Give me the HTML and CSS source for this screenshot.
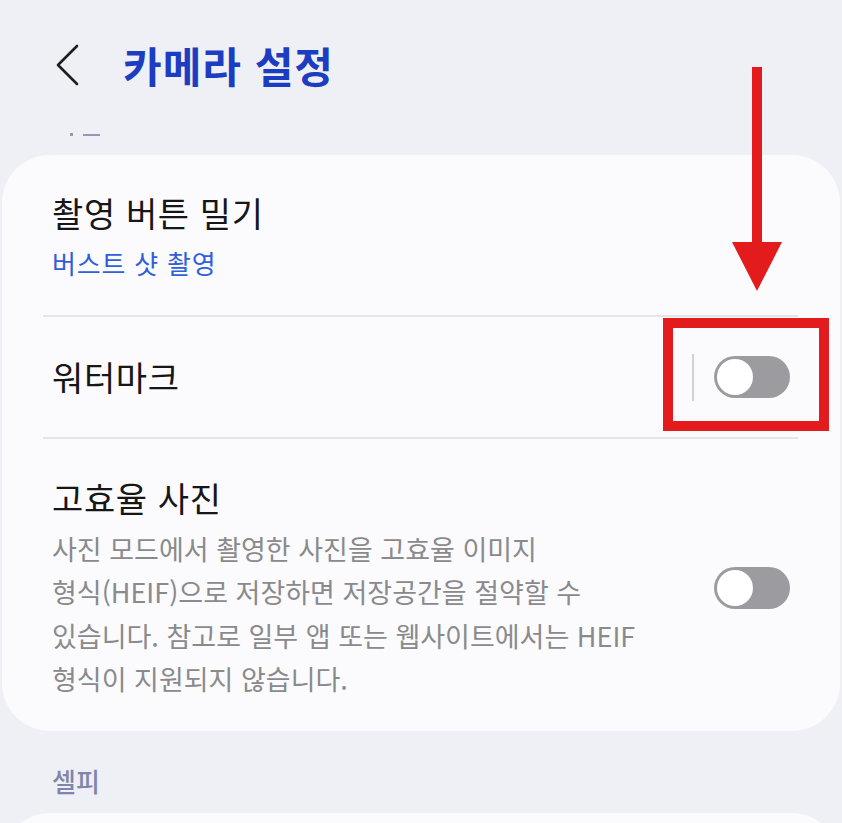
FILE: index.html
```html
<!DOCTYPE html>
<html lang="ko">
<head>
<meta charset="utf-8">
<link rel="stylesheet" href="styles.css">
</head>
<body>
<div class="screen">
  <header class="topbar">
    <svg class="back" width="24" height="42" viewBox="0 0 24 42"><polyline points="21,2 2,21 21,40" fill="none" stroke="#1e1e1e" stroke-width="2.6" stroke-linecap="round" stroke-linejoin="round"/></svg>
    <h1 class="title">카메라 설정</h1>
  </header>
  <div class="clipped"><span class="dot"></span><span class="dash"></span></div>

  <section class="card">
    <div class="row row-first">
      <div class="text">
        <div class="row-title">촬영 버튼 밀기</div>
        <div class="row-sub">버스트 샷 촬영</div>
      </div>
    </div>
    <div class="row row-switch">
      <div class="row-title">워터마크</div>
      <div class="ctrl"><span class="vline"></span><span class="toggle"><span class="knob"></span></span></div>
    </div>
    <div class="row row-desc">
      <div class="text">
        <div class="row-title">고효율 사진</div>
        <div class="row-desc-text">사진 모드에서 촬영한 사진을 고효율 이미지 형식&#8288;(HEIF)&#8288;으로 저장하면 저장공간을 절약할 수 있습니다. 참고로 일부 앱 또는 웹사이트에서는 HEIF 형식이 지원되지 않습니다.</div>
      </div>
      <div class="ctrl"><span class="toggle"><span class="knob"></span></span></div>
    </div>
  </section>

  <div class="section-label">셀피</div>
  <section class="card card-next"></section>

  <div class="highlight"></div>
  <div class="arrow"><span class="shaft"></span><span class="head"></span></div>
</div>
</body>
</html>
```
FILE: styles.css
```css
html, body {
  margin: 0;
  padding: 0;
}
body {
  background: #eef0f5;
  font-family: "Noto Sans CJK KR", "Noto Sans", sans-serif;
  overflow: hidden;
}
.screen {
  position: relative;
  width: 842px;
  height: 823px;
  overflow: hidden;
}
.topbar {
  height: 130px;
  display: flex;
  align-items: center;
  padding-left: 56px;
}
.back {
  display: block;
  margin-right: 43px;
}
.title {
  margin: 0;
  font-size: 42px;
  line-height: 50px;
  font-weight: 700;
  color: #1c3cc2;
  letter-spacing: 1px;
}
.clipped {
  height: 25px;
  display: flex;
  align-items: flex-start;
  padding-left: 70px;
  gap: 10px;
}
.dot {
  margin-top: 3px;
  width: 3px;
  height: 3px;
  background: #9498b4;
}
.dash {
  margin-top: 4px;
  width: 17px;
  height: 2px;
  background: #9498b4;
}
.card {
  margin: 0 2px;
  background: #fbfbfd;
  border-radius: 48px;
  padding: 0 42px 0 41px;
}
.row {
  display: flex;
  align-items: center;
  justify-content: space-between;
  padding: 0 8px 0 9px;
  border-bottom: 2px solid #e5e5e8;
}
.row:last-child {
  border-bottom: none;
}
.row-first {
  padding-top: 36px;
  padding-bottom: 34px;
}
.row-title {
  font-size: 34px;
  line-height: 44px;
  color: #161616;
  letter-spacing: 0.6px;
}
.row-sub {
  margin-top: 10px;
  font-size: 26px;
  line-height: 36px;
  color: #2f5fda;
  letter-spacing: 0.8px;
}
.row-switch {
  height: 120px;
}
.row-desc {
  padding-top: 37px;
  padding-bottom: 31px;
}
.row-desc-text {
  margin-top: 7px;
  width: 610px;
  font-size: 27px;
  line-height: 43.3px;
  color: #8a8a8c;
  letter-spacing: 0;
  word-break: keep-all;
}
.ctrl {
  display: flex;
  align-items: center;
}
.vline {
  width: 2px;
  height: 47px;
  background: #d2d2d4;
  margin-right: 20px;
}
.toggle {
  position: relative;
  display: block;
  width: 76px;
  height: 42px;
  border-radius: 21px;
  background: #9b9ba0;
}
.knob {
  position: absolute;
  left: 3px;
  top: 3px;
  width: 36px;
  height: 36px;
  border-radius: 50%;
  background: #ffffff;
}
.section-label {
  height: 82px;
  box-sizing: border-box;
  padding: 34px 0 0 52px;
  font-size: 26px;
  line-height: 32px;
  font-weight: 500;
  color: #7f86aa;
}
.card-next {
  height: 120px;
}
.highlight {
  position: absolute;
  left: 663px;
  top: 318px;
  width: 166px;
  height: 113px;
  box-sizing: border-box;
  border: 10px solid #e31b1d;
}
.arrow {
  position: absolute;
  left: 732px;
  top: 67px;
  width: 50px;
  display: flex;
  flex-direction: column;
  align-items: center;
}
.shaft {
  width: 10px;
  height: 175px;
  background: #e31b1d;
}
.head {
  width: 0;
  height: 0;
  border-left: 25px solid transparent;
  border-right: 25px solid transparent;
  border-top: 49px solid #e31b1d;
}
```
